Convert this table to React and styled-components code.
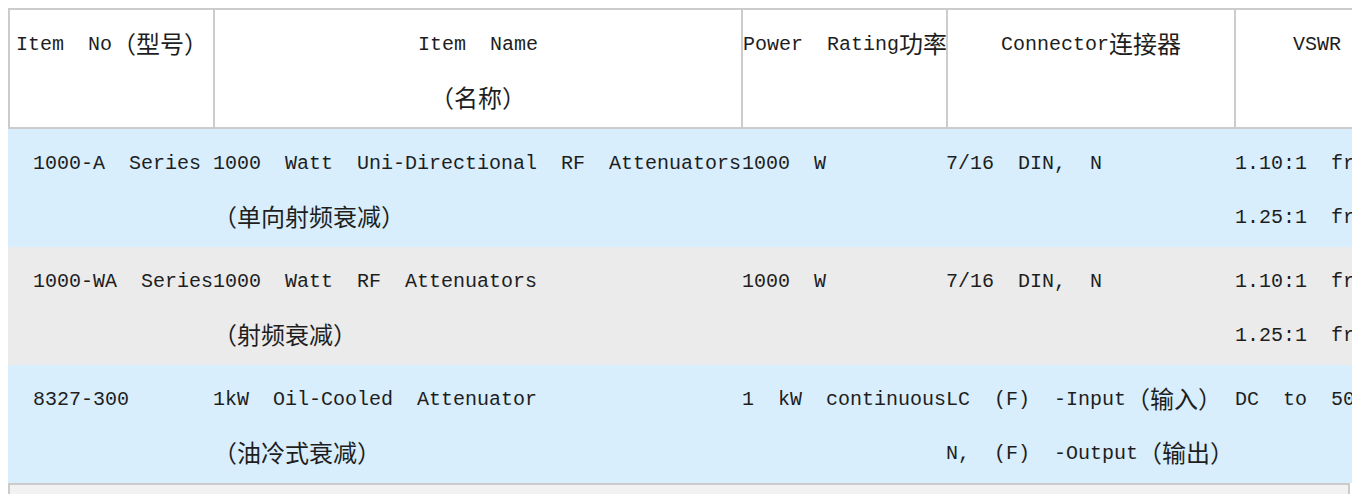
import styled, { createGlobalStyle } from 'styled-components';

const GlobalStyle = createGlobalStyle`
    body {
        margin: 8px;
        background: #ffffff;
        color: #1e1e1e;
        font-family: "Liberation Mono", "Noto Sans CJK SC", monospace;
    }
`;

const COLUMNS = '205px 528px 205px 288px 164px';

const Wrapper = styled.div`
    width: 1344px;
    overflow: hidden;
`;

const Table = styled.div`
    width: 1390px;
    font-size: 20px;
    word-spacing: 12px;
    line-height: 54px;
`;

const HeadRow = styled.div`
    display: grid;
    grid-template-columns: ${COLUMNS};
    border-top: 2px solid #cccccc;
    border-bottom: 2px solid #cccccc;
    background: #ffffff;
`;

const HeadCell = styled.div`
    border-left: 2px solid #cccccc;
    padding: 8px 0 1px;
    padding-left: ${(p) => p.$pad ?? (p.$left ? 6 : 0)}px;
    text-align: ${(p) => (p.$left ? 'left' : 'center')};
    white-space: nowrap;
    min-height: 108px;
`;

const Row = styled.div`
    display: grid;
    grid-template-columns: ${COLUMNS};
    background: ${(p) => (p.$tone === 'gray' ? '#ebebeb' : '#d8eefc')};
    padding: 8px 0 2px;
`;

const Cell = styled.div`
    white-space: nowrap;
    padding-left: ${(p) => p.$indent || 0}px;
`;

const Line = styled.div`
    height: 54px;
`;

const Zh = styled.span`
    font-family: "Noto Sans CJK SC", sans-serif;
    font-size: 24px;
    line-height: 20px;
    word-spacing: 0;
    vertical-align: -3px;
`;

const Footer = styled.div`
    width: 1338px;
    height: 12px;
    border: 2px solid #cccccc;
    border-bottom: none;
    background: #f2f2f2;
`;

const CJK = /([\u3000-\u303f\u4e00-\u9fff\uff00-\uffef]+)/;

const Mixed = ({ text }) =>
    text.split(CJK).map((part, i) =>
        i % 2 === 1 ? <Zh key={i}>{part}</Zh> : part
    );

const Lines = ({ lines }) => lines.map((l, i) => <Line key={i}><Mixed text={l} /></Line>);

const rows = [
    {
        tone: 'blue',
        no: '1000-A Series',
        name: ['1000 Watt Uni-Directional RF Attenuators', '（单向射频衰减）'],
        power: ['1000 W'],
        conn: ['7/16 DIN, N'],
        vswr: ['1.10:1 fr', '1.25:1 fr'],
    },
    {
        tone: 'gray',
        no: '1000-WA Series',
        name: ['1000 Watt RF Attenuators', '（射频衰减）'],
        power: ['1000 W'],
        conn: ['7/16 DIN, N'],
        vswr: ['1.10:1 fr', '1.25:1 fr'],
    },
    {
        tone: 'blue',
        no: '8327-300',
        name: ['1kW Oil-Cooled Attenuator', '（油冷式衰减）'],
        power: ['1 kW continuous'],
        conn: ['LC (F) -Input（输入）', 'N, (F) -Output（输出）'],
        vswr: ['DC to 50'],
    },
];

function App() {
    return (
        <>
            <GlobalStyle />
            <Wrapper>
                <Table>
                    <HeadRow>
                        <HeadCell $left><Lines lines={['Item No（型号）']} /></HeadCell>
                        <HeadCell><Lines lines={['Item Name', '（名称）']} /></HeadCell>
                        <HeadCell $left $pad={0}><Lines lines={['Power Rating功率']} /></HeadCell>
                        <HeadCell><Lines lines={['Connector连接器']} /></HeadCell>
                        <HeadCell><Lines lines={['VSWR']} /></HeadCell>
                    </HeadRow>
                    {rows.map((r) => (
                        <Row key={r.no} $tone={r.tone}>
                            <Cell $indent={25}><Lines lines={[r.no]} /></Cell>
                            <Cell><Lines lines={r.name} /></Cell>
                            <Cell $indent={1}><Lines lines={r.power} /></Cell>
                            <Cell><Lines lines={r.conn} /></Cell>
                            <Cell $indent={1}><Lines lines={r.vswr} /></Cell>
                        </Row>
                    ))}
                </Table>
                <Footer />
            </Wrapper>
        </>
    );
}

export default App;
